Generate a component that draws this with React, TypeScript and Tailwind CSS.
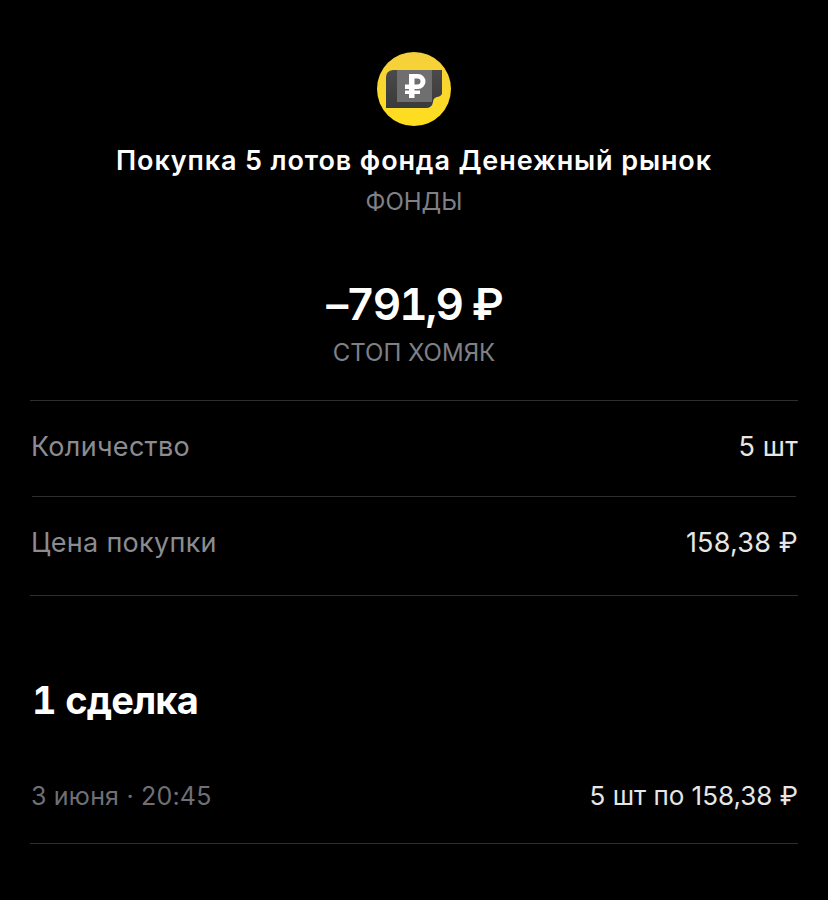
import React from "react";

function FundIcon() {
  return (
    <svg width="74" height="74" viewBox="0 0 74 74" className="block">
      <defs>
        <linearGradient id="coin" x1="0" y1="0" x2="0" y2="1">
          <stop offset="0" stopColor="#f5cf3c" />
          <stop offset="1" stopColor="#ffdf1e" />
        </linearGradient>
        <linearGradient id="card" x1="0" y1="0" x2="0" y2="1">
          <stop offset="0" stopColor="#4a4a4a" />
          <stop offset="1" stopColor="#3a3a3a" />
        </linearGradient>
      </defs>
      <circle cx="37" cy="37" r="37" fill="url(#coin)" />
      <path d="M9 25 Q9 19 16 18 L65 18 L65 41 Q65 44 60 45 Q56 46 56 50 Q55 56 49 56 L9 56 Z" fill="url(#card)" />
      <path d="M20 18 L55 18 L55 50 L20 50 Z" fill="#6f6f6f" />
      <path
        d="M32 22 H41 A7.5 7.5 0 0 1 41 37 H37.5 V38.5 H43 V42 H37.5 V46 H32 V42 H28 V38.5 H32 V37 H28 V32.5 H32 Z M37.5 26.5 V32.5 H40.5 A3 3 0 0 0 40.5 26.5 Z"
        fill="#fff"
        fillRule="evenodd"
      />
    </svg>
  );
}

function Row({ label, value }: { label: string; value: string }) {
  return (
    <div className="flex h-[95px] items-center justify-between pb-[4px]">
      <span className="pl-px text-[27px] leading-[32px] tracking-[0.3px] text-[#8b8c91]">{label}</span>
      <span className="text-[27px] leading-[32px] tracking-[0.2px] text-[#e6e6e6]">{value}</span>
    </div>
  );
}

export default function App() {
  return (
    <div className="h-[900px] w-[828px] overflow-hidden bg-black font-['Inter','Roboto',sans-serif]">
      <div className="flex flex-col items-center pt-[52px]">
        <FundIcon />
        <h1 className="mt-[18px] text-[27px] leading-[34px] font-semibold tracking-[0.88px] whitespace-nowrap text-white">
          Покупка 5 лотов фонда Денежный рынок
        </h1>
        <div className="mt-[9px] text-[24px] leading-[30px] text-[#7f8085]">ФОНДЫ</div>
        <div className="mt-[61px] text-[44px] leading-[52px] font-semibold tracking-[-2px] text-white tabular-nums">–791,9 ₽</div>
        <div className="mt-[8px] text-[24px] leading-[30px] text-[#7f8085]">СТОП ХОМЯК</div>
      </div>
      <div className="mt-[32px] px-[30px]">
        <div className="border-t border-[#2e2e2e]">
          <Row label="Количество" value="5 шт" />
        </div>
        <div className="mx-[2px] border-t border-[#2e2e2e]" />
        <div className="h-[98px]">
          <Row label="Цена покупки" value="158,38 ₽" />
        </div>
        <div className="border-t border-[#2e2e2e]" />
        <h2 className="mt-[81px] ml-[2px] text-[38px] leading-[46px] font-bold tracking-[-0.8px] text-white tabular-nums">1 сделка</h2>
        <div className="mt-[55px] flex h-[66px] items-start justify-between border-b border-[#2e2e2e] pt-[2px]">
          <span className="pl-px text-[25px] leading-[32px] tracking-[0.2px] text-[#6f7075]">3 июня · 20:45</span>
          <span className="text-[26px] leading-[32px] text-[#e6e6e6]">5 шт по 158,38 ₽</span>
        </div>
      </div>
    </div>
  );
}
